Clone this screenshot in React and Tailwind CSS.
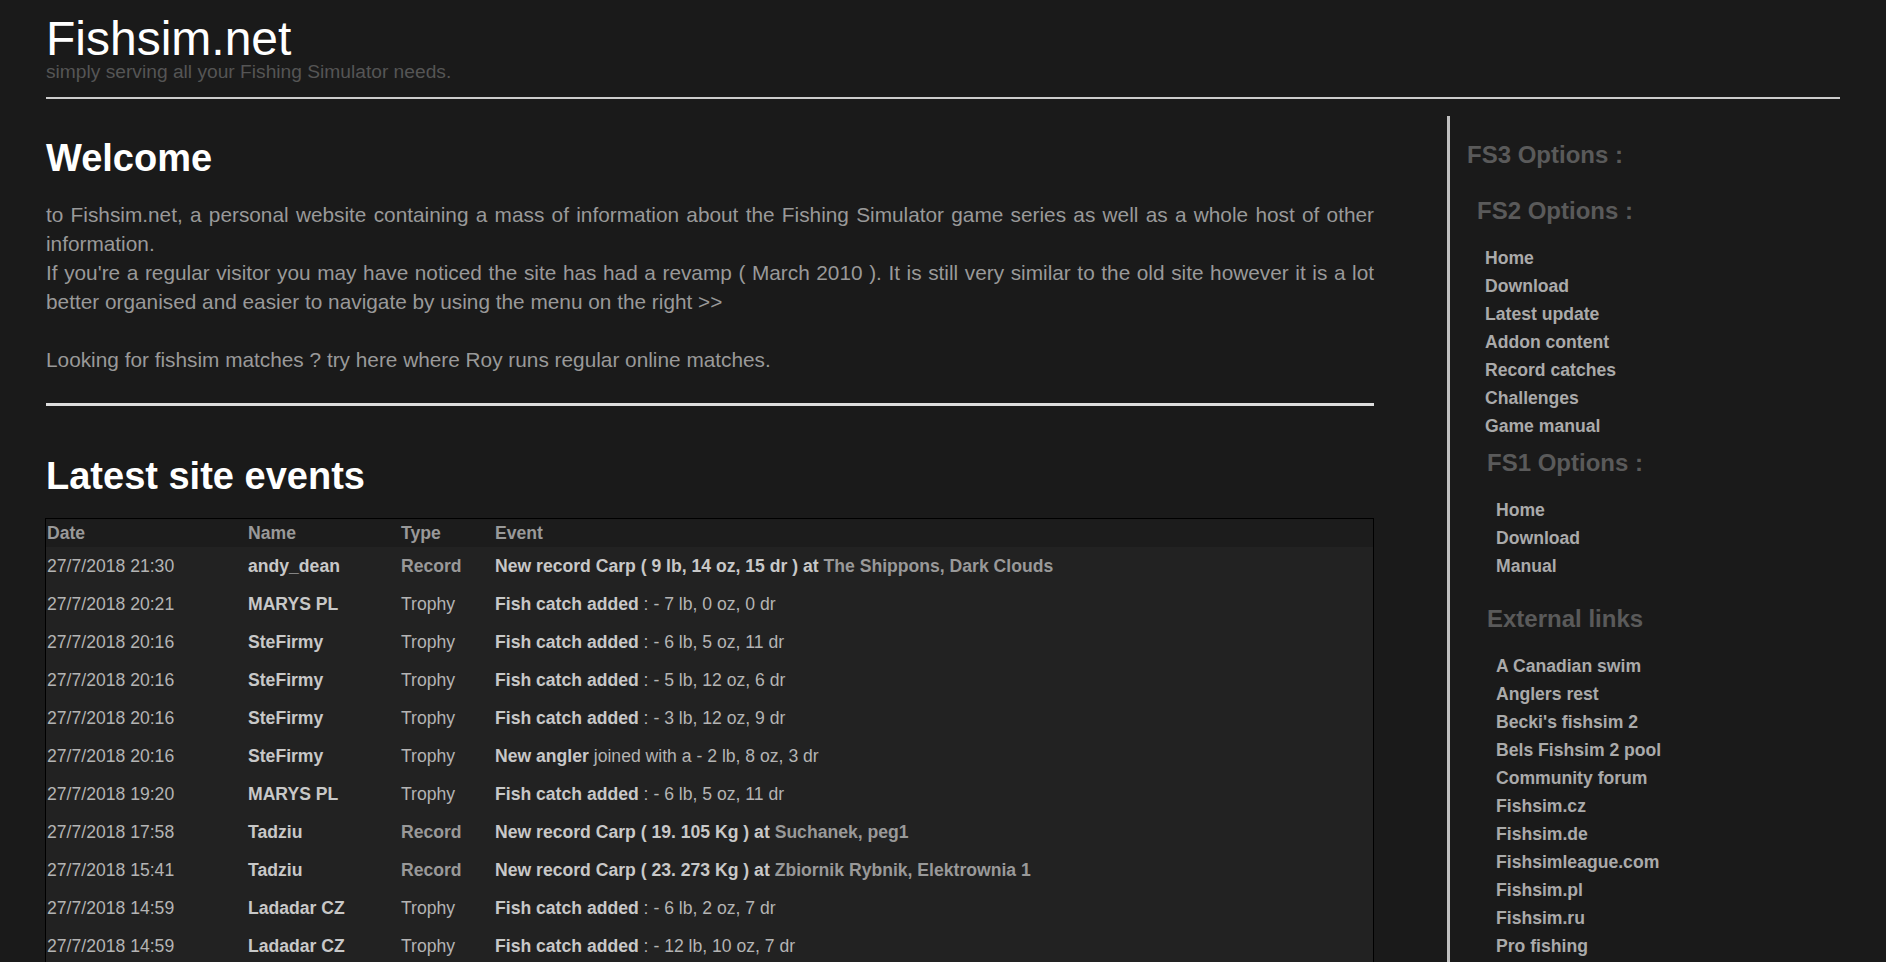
const events = [
    { date: '27/7/2018 21:30', name: 'andy_dean', type: 'Record', lead: 'New record Carp ( 9 lb, 14 oz, 15 dr ) at', place: 'The Shippons, Dark Clouds' },
    { date: '27/7/2018 20:21', name: 'MARYS PL', type: 'Trophy', lead: 'Fish catch added', rest: ' : - 7 lb, 0 oz, 0 dr' },
    { date: '27/7/2018 20:16', name: 'SteFirmy', type: 'Trophy', lead: 'Fish catch added', rest: ' : - 6 lb, 5 oz, 11 dr' },
    { date: '27/7/2018 20:16', name: 'SteFirmy', type: 'Trophy', lead: 'Fish catch added', rest: ' : - 5 lb, 12 oz, 6 dr' },
    { date: '27/7/2018 20:16', name: 'SteFirmy', type: 'Trophy', lead: 'Fish catch added', rest: ' : - 3 lb, 12 oz, 9 dr' },
    { date: '27/7/2018 20:16', name: 'SteFirmy', type: 'Trophy', lead: 'New angler', rest: ' joined with a - 2 lb, 8 oz, 3 dr' },
    { date: '27/7/2018 19:20', name: 'MARYS PL', type: 'Trophy', lead: 'Fish catch added', rest: ' : - 6 lb, 5 oz, 11 dr' },
    { date: '27/7/2018 17:58', name: 'Tadziu', type: 'Record', lead: 'New record Carp ( 19. 105 Kg ) at', place: 'Suchanek, peg1' },
    { date: '27/7/2018 15:41', name: 'Tadziu', type: 'Record', lead: 'New record Carp ( 23. 273 Kg ) at', place: 'Zbiornik Rybnik, Elektrownia 1' },
    { date: '27/7/2018 14:59', name: 'Ladadar CZ', type: 'Trophy', lead: 'Fish catch added', rest: ' : - 6 lb, 2 oz, 7 dr' },
    { date: '27/7/2018 14:59', name: 'Ladadar CZ', type: 'Trophy', lead: 'Fish catch added', rest: ' : - 12 lb, 10 oz, 7 dr' },
];

const fs2Links = ['Home', 'Download', 'Latest update', 'Addon content', 'Record catches', 'Challenges', 'Game manual'];
const fs1Links = ['Home', 'Download', 'Manual'];
const externalLinks = [
    'A Canadian swim', 'Anglers rest', "Becki's fishsim 2", 'Bels Fishsim 2 pool', 'Community forum',
    'Fishsim.cz', 'Fishsim.de', 'Fishsimleague.com', 'Fishsim.pl', 'Fishsim.ru', 'Pro fishing',
];

function SideLinks({ items, indent }) {
    return (
        <ul className={`mt-[19px] ${indent}`}>
            {items.map(item => (
                <li key={item} className="h-[28px] leading-[28px] text-[17.6px] font-bold text-[#aaa] whitespace-nowrap">
                    <a href="#">{item}</a>
                </li>
            ))}
        </ul>
    );
}

export default function App() {
    return (
        <div className="min-h-screen bg-[#1a1a1a] font-['Liberation_Sans',Arial,sans-serif] px-[46px] overflow-hidden">
            {/* Header */}
            <div className="pt-[17px]">
                <div className="text-[48px] leading-[44px] text-white">Fishsim.net</div>
                <div className="text-[19.2px] leading-[22px] text-[#555]">simply serving all your Fishing Simulator needs.</div>
            </div>
            <div className="mt-[14px] h-[2px] bg-[#ccc]"></div>

            <div className="flex">
                {/* Main column */}
                <div className="w-[1328px] shrink-0">
                    <h1 className="mt-[37px] text-[38px] leading-[44px] font-bold text-white">Welcome</h1>
                    <p className="mt-[20px] text-[20.8px] leading-[29px] text-[#999] text-justify">
                        to Fishsim.net, a personal website containing a mass of information about the Fishing Simulator game series as well as a whole host of other information.
                        <br />
                        If you're a regular visitor you may have noticed the site has had a revamp ( March 2010 ). It is still very similar to the old site however it is a lot better organised and easier to navigate by using the menu on the right &gt;&gt;
                        <br />
                        <br />
                        Looking for fishsim matches ? try here where Roy runs regular online matches.
                    </p>
                    <div className="mt-[29px] h-[3px] bg-[#ddd]"></div>

                    <h2 className="mt-[48px] text-[38px] leading-[44px] font-bold text-white">Latest site events</h2>

                    <div className="mt-[20px] -ml-[1px] border border-black text-[17.6px]">
                        <div className="grid grid-cols-[201px_153px_94px_1fr] pl-[1px] h-[28px] items-center bg-[#1c1c1c] font-bold text-[#999]">
                            <div>Date</div>
                            <div>Name</div>
                            <div>Type</div>
                            <div>Event</div>
                        </div>
                        <div className="bg-[#222]">
                            {events.map((ev, i) => (
                                <div key={i} className="grid grid-cols-[201px_153px_94px_1fr] pl-[1px] h-[38px] items-center whitespace-nowrap">
                                    <div className="text-[#b4b4b4]">{ev.date}</div>
                                    <div className="font-bold text-[#c8c8c8]">{ev.name}</div>
                                    {ev.type === 'Record' ? (
                                        <div className="font-bold text-[#999]">Record</div>
                                    ) : (
                                        <div className="text-[#b4b4b4]">Trophy</div>
                                    )}
                                    <div className="text-[#b4b4b4]">
                                        <span className="font-bold text-[#c8c8c8]">{ev.lead}</span>
                                        {ev.place ? (
                                            <span className="font-bold text-[#999]"> {ev.place}</span>
                                        ) : (
                                            ev.rest
                                        )}
                                    </div>
                                </div>
                            ))}
                        </div>
                    </div>
                </div>

                {/* Sidebar */}
                <div className="ml-[73px] mt-[17px] flex-1 border-l-[3px] border-[#c0c0c0] min-h-[900px]">
                    <div className="pl-[17px]">
                        <h3 className="mt-[25px] text-[24px] leading-[28px] font-bold text-[#5a5a5a]">FS3 Options :</h3>
                        <div className="pl-[10px]">
                            <h3 className="mt-[28px] text-[24px] leading-[28px] font-bold text-[#5a5a5a]">FS2 Options :</h3>
                            <SideLinks items={fs2Links} indent="pl-[8px]" />
                        </div>
                        <div className="pl-[20px]">
                            <h3 className="mt-[9px] text-[24px] leading-[28px] font-bold text-[#5a5a5a]">FS1 Options :</h3>
                            <SideLinks items={fs1Links} indent="pl-[9px]" />
                            <h3 className="mt-[25px] text-[24px] leading-[28px] font-bold text-[#5a5a5a]">External links</h3>
                            <SideLinks items={externalLinks} indent="pl-[9px]" />
                        </div>
                    </div>
                </div>
            </div>
        </div>
    );
}
